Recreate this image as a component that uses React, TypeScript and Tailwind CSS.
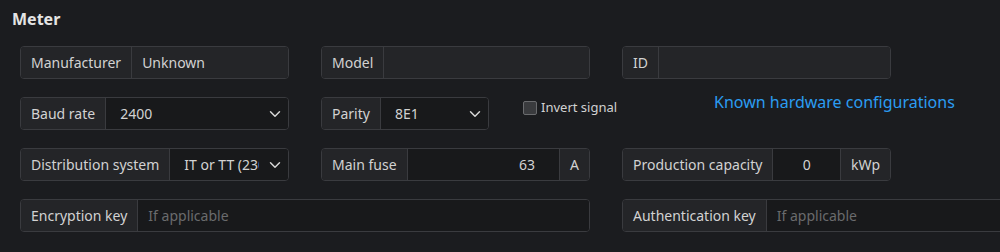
import React from 'react';

const font = "font-['Noto_Sans',sans-serif]";

const Chevron: React.FC = () => (
  <svg className="w-[12px] h-[12px] text-[#d4d4d4]" viewBox="0 0 16 16" fill="none" stroke="currentColor" strokeWidth="2" strokeLinecap="round" strokeLinejoin="round" aria-hidden="true">
    <path d="M2 5l6 6 6-6" />
  </svg>
);

const Label: React.FC<{ text: string; className?: string }> = ({ text, className = '' }) => (
  <div className={`flex items-center px-[10px] bg-[#242528] text-[#d2d2d2] whitespace-nowrap ${className}`}>{text}</div>
);

const Addon: React.FC<{ text: string }> = ({ text }) => (
  <div className="flex items-center px-[10px] bg-[#242528] text-[#d2d2d2] border-l border-[#3a3b3f]">{text}</div>
);

const Group: React.FC<{ className?: string; children: React.ReactNode }> = ({ className = '', children }) => (
  <div className={`flex h-[33px] rounded-[4px] border border-[#3a3b3f] overflow-hidden ${className}`}>{children}</div>
);

const TextField: React.FC<{ label: string; value?: string; placeholder?: string; dark?: boolean }> = ({ label, value, placeholder, dark }) => (
  <Group>
    <Label text={label} className="border-r border-[#3a3b3f]" />
    <div className={`flex-1 flex items-center px-[10px] ${dark ? 'bg-[#18191b]' : 'bg-[#242528]'}`}>
      {value ? <span className="text-[#d2d2d2]">{value}</span> : <span className="text-[#6a6b6d]">{placeholder}</span>}
    </div>
  </Group>
);

const SelectField: React.FC<{ label: string; value: string; className?: string }> = ({ label, value, className = '' }) => (
  <Group className={className}>
    <Label text={label} className="border-r border-[#3a3b3f]" />
    <div className="flex-1 min-w-0 flex items-center bg-[#18191b] pl-[14px] pr-[6px]">
      <span className="flex-1 min-w-0 overflow-hidden whitespace-nowrap text-[#d2d2d2]">{value}</span>
      <span className="ml-[10px] mr-[1px]"><Chevron /></span>
    </div>
  </Group>
);

export default function App() {
  return (
    <div className={`w-[1000px] h-[252px] overflow-hidden bg-[#1b1c1f] text-[14px] ${font}`}>
      <h2 className="pl-[12px] pt-[9px] text-[16px] font-bold text-[#e4e4e4] leading-[20px]">Meter</h2>
      <div className="grid grid-cols-[269px_269px_269px_269px] auto-rows-[33px] gap-x-[32px] gap-y-[18px] pl-[20px] pt-[17px] w-[1200px]">
        <TextField label="Manufacturer" value="Unknown" />
        <TextField label="Model" />
        <TextField label="ID" />
        <div />

        <SelectField label="Baud rate" value="2400" />
        <div className="flex items-start">
          <SelectField label="Parity" value="8E1" className="w-[168px] shrink-0" />
          <label className="flex items-center gap-[4px] ml-[34px] mt-[1px] whitespace-nowrap text-[#d2d2d2] text-[13px]">
            <span className="w-[14px] h-[14px] rounded-[2px] border border-[#6a6b6e] bg-[#3a3b3e]" />
            Invert signal
          </label>
        </div>
        <div className="col-span-2 flex items-start pl-[92px] -mt-[7px]">
          <a className="text-[#2b9cf2] text-[16px] leading-[24px] whitespace-nowrap">Known hardware configurations</a>
        </div>

        <SelectField label="Distribution system" value="IT or TT (230V)" />
        <Group>
          <Label text="Main fuse" className="border-r border-[#3a3b3f]" />
          <div className="flex-1 flex items-center justify-end pr-[24px] bg-[#18191b] text-[#d2d2d2]">63</div>
          <Addon text="A" />
        </Group>
        <Group>
          <Label text="Production capacity" className="border-r border-[#3a3b3f]" />
          <div className="w-[67px] flex items-center justify-center bg-[#18191b] text-[#d2d2d2]">0</div>
          <Addon text="kWp" />
        </Group>
        <div />

        <div className="col-span-2"><TextField label="Encryption key" placeholder="If applicable" dark /></div>
        <div className="col-span-2"><TextField label="Authentication key" placeholder="If applicable" dark /></div>
      </div>
    </div>
  );
}
